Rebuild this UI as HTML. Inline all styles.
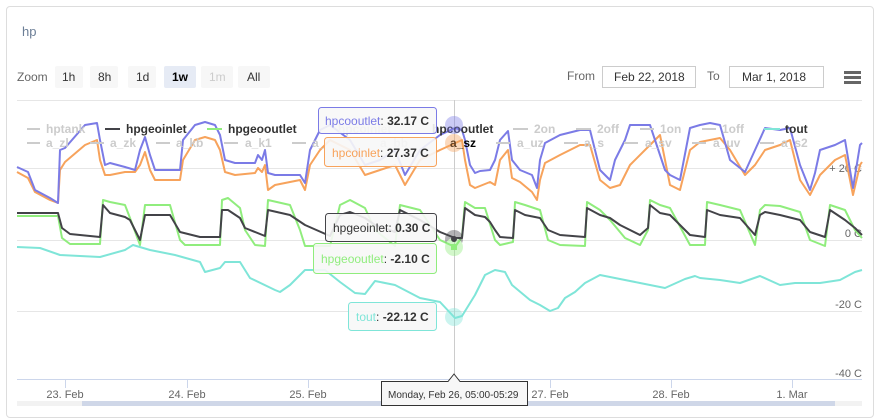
<!DOCTYPE html>
<html><head><meta charset="utf-8"><style>
body{margin:0;background:#fff;width:877px;height:406px;overflow:hidden;font-family:"Liberation Sans",sans-serif;}
.card{position:absolute;left:6px;top:6px;width:866px;height:410px;border:1px solid #ddd;border-radius:4px;}
</style></head><body>
<div class="card"></div>
<svg width="877" height="406" style="position:absolute;left:0;top:0" font-family="Liberation Sans, sans-serif">
<text x="22" y="36" font-size="13" fill="#6b7e96">hp</text>
<text x="17" y="81" font-size="12" fill="#666">Zoom</text>
<g font-size="12" fill="#333">
<rect x="55" y="66" width="28" height="22" rx="2" fill="#f7f7f7"/><text x="62" y="81">1h</text>
<rect x="90" y="66" width="28" height="22" rx="2" fill="#f7f7f7"/><text x="98" y="81">8h</text>
<rect x="128" y="66" width="28" height="22" rx="2" fill="#f7f7f7"/><text x="136" y="81">1d</text>
<rect x="164" y="66" width="32" height="22" rx="2" fill="#e6ebf5"/><text x="172" y="81" font-weight="bold" fill="#000">1w</text>
<rect x="201" y="66" width="32" height="22" rx="2" fill="#f7f7f7"/><text x="209" y="81" fill="#ccc">1m</text>
<rect x="238" y="66" width="32" height="22" rx="2" fill="#f7f7f7"/><text x="247" y="81">All</text>
</g>
<text x="567" y="80" font-size="12" fill="#666">From</text>
<rect x="602.5" y="66.5" width="93" height="21" fill="#fff" stroke="#ccc"/>
<text x="614" y="81" font-size="12" fill="#333">Feb 22, 2018</text>
<text x="707" y="80" font-size="12" fill="#666">To</text>
<rect x="729.5" y="66.5" width="94" height="21" fill="#fff" stroke="#ccc"/>
<text x="742" y="81" font-size="12" fill="#333">Mar 1, 2018</text>
<g fill="#666"><rect x="844" y="71" width="17" height="3"/><rect x="844" y="76" width="17" height="3"/><rect x="844" y="81" width="17" height="3"/></g>
<line x1="17" y1="100.5" x2="862" y2="100.5" stroke="#e6e6e6"/>
<g stroke="#e6e6e6"><line x1="17" y1="168.5" x2="862" y2="168.5"/><line x1="17" y1="240.5" x2="862" y2="240.5"/><line x1="17" y1="311.5" x2="862" y2="311.5"/></g>
<line x1="17" y1="379.5" x2="862" y2="379.5" stroke="#ccd6eb"/>
<g stroke="#ccd6eb"><line x1="65.5" y1="380" x2="65.5" y2="388"/><line x1="187.5" y1="380" x2="187.5" y2="388"/><line x1="308.5" y1="380" x2="308.5" y2="388"/><line x1="550.5" y1="380" x2="550.5" y2="388"/><line x1="671.5" y1="380" x2="671.5" y2="388"/><line x1="792.5" y1="380" x2="792.5" y2="388"/></g>
<g font-size="11" fill="#666" text-anchor="end"><text x="862" y="172">+ 20 C</text><text x="862" y="237">0 C</text><text x="862" y="308">-20 C</text><text x="862" y="377">-40 C</text></g>
<g font-size="11" fill="#666" text-anchor="middle"><text x="65" y="398">23. Feb</text><text x="187" y="398">24. Feb</text><text x="308" y="398">25. Feb</text><text x="550" y="398">27. Feb</text><text x="671" y="398">28. Feb</text><text x="792" y="398">1. Mar</text></g>
<rect x="17" y="401" width="845" height="5" fill="#f2f2f2"/><rect x="82" y="401" width="753" height="5" fill="#cfd7e8"/>
<line x1="454.5" y1="100" x2="454.5" y2="380" stroke="#ccc"/>
<g fill="none" stroke-width="2" stroke-linejoin="round">
<polyline stroke="#f7a35c" points="17,172 28,178 35,192 50,200 58,203 60,170 65,162 85,145 97,140 100,160 105,175 110,175 125,172 135,172 140,165 145,152 150,170 155,180 180,180 183,160 195,140 205,137 215,140 220,150 225,172 235,175 255,173 258,168 262,172 265,165 268,190 275,185 300,180 305,190 310,165 320,150 330,140 350,150 365,175 380,170 395,165 405,185 420,160 440,150 462,140 465,160 470,185 475,188 480,186 490,182 495,185 500,160 508,150 512,178 520,182 532,192 537,200 540,180 545,163 560,155 580,145 590,145 600,180 610,188 620,185 630,165 650,145 660,135 665,160 670,185 680,190 690,150 700,142 720,138 730,150 745,175 755,165 765,150 780,145 790,140 800,180 810,195 815,185 820,175 835,160 845,155 853,195 860,165 862,162"/>
<polyline stroke="#7b7be6" points="17,167 28,172 35,190 50,198 58,203 60,150 65,148 85,125 97,123 100,140 105,165 110,163 125,167 135,170 140,150 145,137 150,155 155,170 180,170 183,140 195,125 205,122 215,125 220,135 225,160 235,163 255,163 258,155 262,160 265,150 268,173 275,175 300,175 305,183 310,150 320,130 330,125 350,140 365,165 380,160 395,150 405,175 420,150 440,135 455,128 462,130 465,140 470,165 475,173 480,171 490,170 495,160 500,140 508,131 512,160 520,170 532,175 537,188 540,160 545,143 560,135 580,130 590,130 600,170 610,180 615,160 625,140 630,125 650,125 655,140 665,170 670,175 680,180 690,128 700,125 710,123 720,125 730,160 745,172 755,150 765,128 780,130 790,128 800,165 810,190 815,173 820,150 835,145 845,140 853,188 860,145 862,143"/>
<polyline stroke="#90ed7d" points="17,216 58,216 62,238 70,244 100,244 103,200 110,202 125,205 130,218 140,245 145,205 170,205 180,240 185,245 220,245 222,200 228,198 240,208 245,230 255,245 265,246 268,200 290,205 300,230 305,246 330,246 340,205 350,200 365,208 375,230 395,246 400,205 420,210 440,240 455,247 462,237 465,202 475,208 485,208 495,240 500,245 513,242 515,202 525,205 540,210 548,240 560,245 585,246 587,202 600,210 610,220 625,238 640,245 648,230 650,200 660,205 670,208 690,245 705,245 707,202 720,205 740,210 755,245 760,210 765,205 780,206 800,212 810,240 825,246 830,205 845,210 855,230 862,238"/>
<polyline stroke="#434348" points="17,213 58,213 62,228 70,234 100,237 103,205 110,213 125,217 130,220 140,240 145,215 170,215 180,232 200,237 220,237 222,210 228,210 240,218 245,228 265,236 268,210 290,215 305,225 330,236 340,215 350,212 365,218 375,225 395,232 400,210 420,220 440,232 455,238 462,238 465,208 475,215 485,217 490,222 495,230 500,237 513,238 515,210 525,215 540,218 548,230 560,235 585,237 587,208 600,215 610,218 620,225 640,235 648,228 650,205 660,213 670,215 690,235 705,237 707,210 720,215 740,218 755,235 760,215 765,212 780,215 800,220 810,232 825,237 830,210 845,220 855,228 862,235"/>
<polyline stroke="#7fe5d8" points="17,247 40,248 60,255 80,256 100,257 125,250 133,245 150,250 175,255 200,262 205,272 220,268 225,262 240,262 250,278 275,290 280,292 290,285 305,270 325,270 340,282 355,293 365,294 375,281 395,285 420,298 440,302 455,318 462,316 475,295 485,275 495,270 505,272 512,285 530,300 540,305 550,311 558,308 565,298 575,292 585,283 600,275 620,279 640,283 665,288 685,279 695,276 700,278 720,280 740,283 760,276 780,285 795,283 820,283 840,280 855,272 862,270"/>
</g>
<g stroke-width="2"><line x1="27" y1="129" x2="40" y2="129" stroke="#ccc"/><line x1="105" y1="129" x2="120" y2="129" stroke="#434348"/><line x1="207" y1="129" x2="222" y2="129" stroke="#90ed7d"/><line x1="513" y1="129" x2="528" y2="129" stroke="#ccc"/><line x1="576" y1="129" x2="591" y2="129" stroke="#ccc"/><line x1="640" y1="129" x2="654" y2="129" stroke="#ccc"/><line x1="702" y1="129" x2="716" y2="129" stroke="#ccc"/><line x1="764" y1="129" x2="780" y2="129" stroke="#7fe5d8"/>
<line x1="27" y1="143" x2="40" y2="143" stroke="#ccc"/><line x1="90" y1="143" x2="104" y2="143" stroke="#ccc"/><line x1="156" y1="143" x2="170" y2="143" stroke="#ccc"/><line x1="224" y1="143" x2="238" y2="143" stroke="#ccc"/><line x1="292" y1="143" x2="306" y2="143" stroke="#ccc"/><line x1="496" y1="143" x2="510" y2="143" stroke="#ccc"/><line x1="564" y1="143" x2="578" y2="143" stroke="#ccc"/><line x1="624" y1="143" x2="638" y2="143" stroke="#ccc"/><line x1="692" y1="143" x2="706" y2="143" stroke="#ccc"/><line x1="760" y1="143" x2="774" y2="143" stroke="#ccc"/></g>
<g font-size="12" font-weight="bold" fill="#ccc">
<text x="46" y="133">hptank</text><text x="126" y="133" fill="#333">hpgeoinlet</text><text x="228" y="133" fill="#333">hpgeooutlet</text><text x="338" y="133">hpcoinlet</text><text x="432" y="133" fill="#333">hpcooutlet</text><text x="534" y="133">2on</text><text x="597" y="133">2off</text><text x="660" y="133">1on</text><text x="722" y="133">1off</text><text x="785" y="133" fill="#333">tout</text>
<text x="46" y="147">a_zl</text><text x="110" y="147">a_zk</text><text x="176" y="147">a_kb</text><text x="245" y="147">a_k1</text><text x="312" y="147">a_</text><text x="380" y="147">a_bb</text><text x="450" y="147" fill="#000">a_sz</text><text x="517" y="147">a_uz</text><text x="584" y="147">a_s</text><text x="645" y="147">a_sv</text><text x="713" y="147">a_uv</text><text x="781" y="147">a_s2</text>
</g>
<g opacity="0.4"><circle cx="454" cy="125" r="9" fill="#7b7be6"/><circle cx="454" cy="143" r="9" fill="#f7a35c"/><circle cx="454" cy="239" r="9" fill="#434348"/><circle cx="454" cy="247" r="9" fill="#90ed7d"/><circle cx="454" cy="317" r="9" fill="#7fe5d8"/></g>
<circle cx="454" cy="239" r="3" fill="#434348"/><rect x="451" y="244" width="6" height="6" fill="#90ed7d"/>
<g font-size="12">
<rect x="318.5" y="107.5" width="118" height="26" rx="3" fill="#f7f7f7" fill-opacity=".9" stroke="#7b7be6"/><text x="325" y="125" fill="#7b7be6">hpcooutlet<tspan fill="#333">: </tspan><tspan fill="#333" font-weight="bold">32.17 C</tspan></text>
<rect x="324.5" y="137.5" width="112" height="29" rx="3" fill="#f7f7f7" fill-opacity=".9" stroke="#f7a35c"/><text x="332" y="157" fill="#f7a35c">hpcoinlet<tspan fill="#333">: </tspan><tspan fill="#333" font-weight="bold">27.37 C</tspan></text>
<rect x="325.5" y="213.5" width="111" height="28" rx="3" fill="#f7f7f7" fill-opacity=".9" stroke="#434348"/><text x="333" y="232" fill="#333">hpgeoinlet: <tspan font-weight="bold">0.30 C</tspan></text>
<rect x="313.5" y="243.5" width="123" height="30" rx="3" fill="#f7f7f7" fill-opacity=".9" stroke="#90ed7d"/><text x="321" y="263" fill="#90ed7d">hpgeooutlet<tspan fill="#333">: </tspan><tspan fill="#333" font-weight="bold">-2.10 C</tspan></text>
<rect x="348.5" y="302.5" width="88" height="28" rx="3" fill="#f7f7f7" fill-opacity=".9" stroke="#7fe5d8"/><text x="356" y="321" fill="#7fe5d8">tout<tspan fill="#333">: </tspan><tspan fill="#333" font-weight="bold">-22.12 C</tspan></text>
</g>
<path d="M381.5,381.5 H448 L454,374 L460,381.5 H527.5 V405.5 H381.5 Z" fill="#f7f7f7" stroke="#333"/>
<text x="388" y="398" font-size="10" fill="#333">Monday, Feb 26, 05:00-05:29</text>
</svg>
</body></html>
